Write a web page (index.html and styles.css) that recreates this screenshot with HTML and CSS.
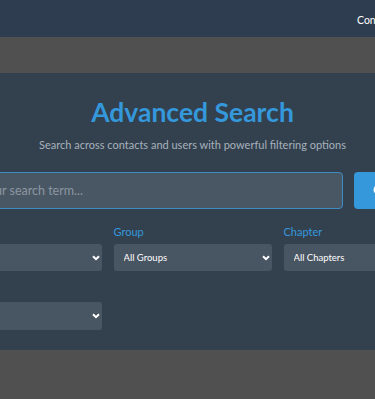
FILE: index.html
```html
<!DOCTYPE html>
<html lang="en">
<head>
    <meta charset="UTF-8">
    <meta name="viewport" content="width=device-width, initial-scale=1.0">
    <title>Advanced Search</title>
    <link rel="stylesheet" href="styles.css">
</head>
<body>
    <!-- Navigation -->
    <nav class="navbar">
        <ul class="nav-links">
            <li><a href="#">Contacts</a></li>
            <li><a href="#">Users</a></li>
            <li><a href="#">Logout</a></li>
        </ul>
    </nav>

    <div class="band"></div>

    <!-- Search -->
    <section class="search-section">
        <div class="search-box">
            <h1>Advanced Search</h1>
            <p class="subtitle">Search across contacts and users with powerful filtering options</p>

            <form class="search-form">
                <div class="search-row">
                    <input type="text" class="search-input" placeholder="Enter your search term...">
                    <button type="button" class="search-btn">
                        <svg width="14" height="14" viewBox="0 0 16 16"><circle cx="6.5" cy="6.5" r="4.8" fill="none" stroke="#fff" stroke-width="2.2"/><path d="M10 10l4.5 4.5" stroke="#fff" stroke-width="2.4" stroke-linecap="round"/></svg>
                        Search
                    </button>
                </div>

                <div class="filters">
                    <div class="filter">
                        <label>Type</label>
                        <div class="select-wrap">
                            <select><option>All Types</option></select>
                            <svg class="chevron" width="8" height="6" viewBox="0 0 8 6"><path d="M1 1.2l3 3 3-3" fill="none" stroke="#fff" stroke-width="2"/></svg>
                        </div>
                    </div>
                    <div class="filter">
                        <label>Group</label>
                        <div class="select-wrap">
                            <select><option>All Groups</option></select>
                            <svg class="chevron" width="8" height="6" viewBox="0 0 8 6"><path d="M1 1.2l3 3 3-3" fill="none" stroke="#fff" stroke-width="2"/></svg>
                        </div>
                    </div>
                    <div class="filter">
                        <label>Chapter</label>
                        <div class="select-wrap">
                            <select><option>All Chapters</option></select>
                            <svg class="chevron" width="8" height="6" viewBox="0 0 8 6"><path d="M1 1.2l3 3 3-3" fill="none" stroke="#fff" stroke-width="2"/></svg>
                        </div>
                    </div>
                    <div class="filter">
                        <label>Role</label>
                        <div class="select-wrap tall">
                            <select><option>All Roles</option></select>
                            <svg class="chevron" width="8" height="6" viewBox="0 0 8 6"><path d="M1 1.2l3 3 3-3" fill="none" stroke="#fff" stroke-width="2"/></svg>
                        </div>
                    </div>
                </div>
            </form>
        </div>
    </section>

    <div class="band bottom"></div>
</body>
</html>
```

FILE: styles.css
```css
/* Base */
*, *::before, *::after {
    box-sizing: border-box;
    margin: 0;
    padding: 0;
}

body {
    font-family: Lato, "Open Sans", sans-serif;
    background-color: #505050;
    color: #fff;
    overflow: hidden;
}

/* Navbar */
.navbar {
    height: 37px;
    background-color: #2e3d4f;
    display: flex;
    align-items: flex-start;
    padding: 8px 0 0 357px;
    white-space: nowrap;
}

.nav-links {
    list-style: none;
    display: flex;
    gap: 20px;
}

.nav-links a {
    color: #fff;
    text-decoration: none;
    font-size: 10.5px;
    line-height: 14px;
}

.band {
    height: 36px;
    background-color: #505050;
}

.band.bottom {
    height: 60px;
}

/* Search section */
.search-section {
    background-color: #33414f;
    display: flex;
    flex-direction: column;
    align-items: center;
    padding: 20px 0 20px 10px;
}

.search-box {
    width: 498px;
    flex-shrink: 0;
}

h1 {
    text-align: center;
    color: #3498db;
    font-size: 26.5px;
    font-weight: 700;
    line-height: 38px;
}

.subtitle {
    text-align: center;
    color: #a7b1bc;
    font-size: 11px;
    margin-top: 7px;
}

.search-form {
    margin-top: 21px;
}

.search-row {
    display: flex;
    gap: 11px;
}

.search-input {
    flex: 1;
    height: 37px;
    background-color: #495663;
    border: 1px solid #3f8cc4;
    border-radius: 4px;
    padding: 0 5px;
    font-family: inherit;
    font-size: 12.5px;
    color: #fff;
}

.search-input::placeholder {
    color: #8b96a2;
}

.search-btn {
    width: 88px;
    height: 37px;
    background-color: #3498db;
    border: none;
    border-radius: 4px;
    color: #fff;
    font-family: inherit;
    font-size: 13px;
    display: flex;
    align-items: center;
    gap: 6px;
    padding-left: 19px;
}

/* Filters */
.filters {
    display: grid;
    grid-template-columns: repeat(3, 158px);
    gap: 12px;
    margin-top: 16px;
}

.filter label {
    display: block;
    color: #3498db;
    font-size: 11px;
    line-height: 14px;
    margin-bottom: 5px;
}

.select-wrap {
    position: relative;
}

.select-wrap select {
    appearance: none;
    width: 100%;
    height: 27px;
    background-color: #485563;
    border: none;
    border-radius: 3px;
    padding: 0 10px;
    font-family: inherit;
    font-size: 9.5px;
    color: #fff;
}

.select-wrap.tall select {
    height: 28px;
}

.chevron {
    position: absolute;
    right: 2px;
    top: 50%;
    margin-top: -3px;
}
```
